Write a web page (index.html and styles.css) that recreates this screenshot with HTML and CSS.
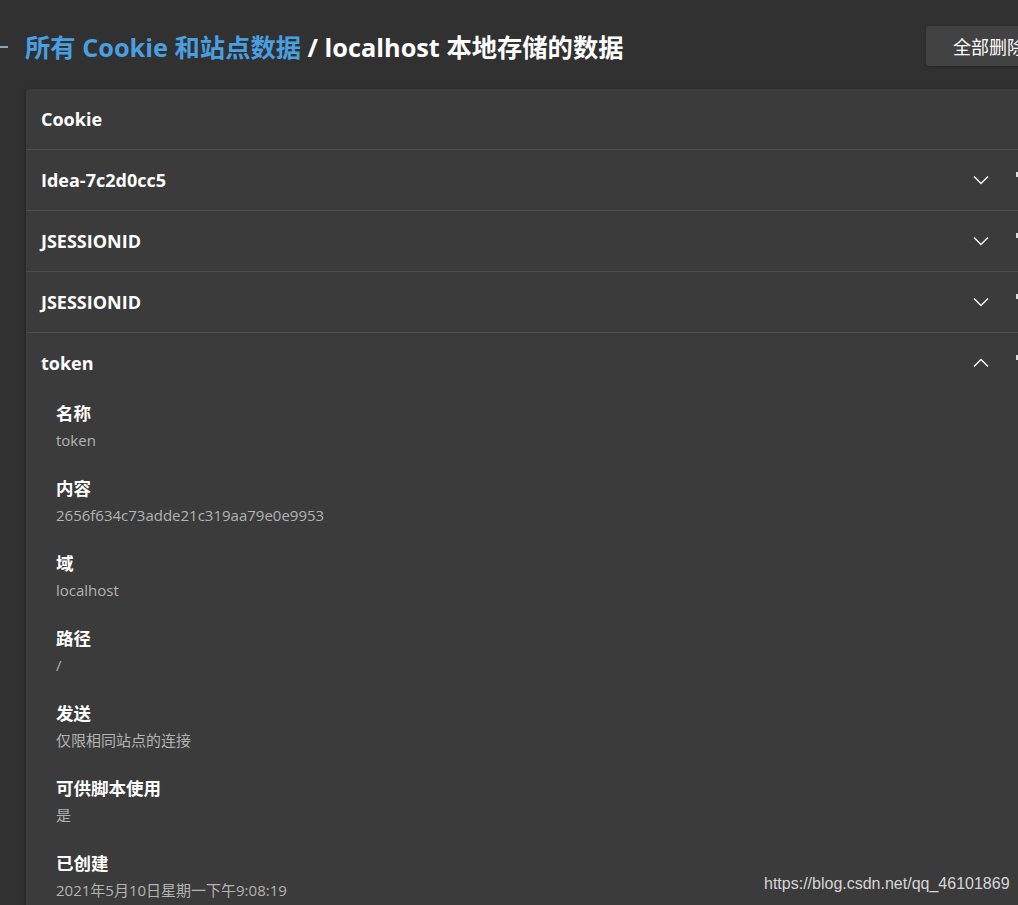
FILE: index.html
```html
<!DOCTYPE html>
<html lang="zh-CN">
<head>
    <meta charset="UTF-8">
    <title>localhost 本地存储的数据</title>
    <link rel="stylesheet" href="styles.css">
</head>
<body>
<div class="page">
    <div class="top">
        <span class="back"></span>
        <h1><span class="crumb">所有 Cookie 和站点数据</span> / localhost 本地存储的数据</h1>
        <button class="remove-all">全部删除</button>
    </div>
    <div class="card">
        <div class="card-head">Cookie</div>
        <div class="row">
            <span class="name">Idea-7c2d0cc5</span>
            <svg class="chev" viewBox="0 0 16 10"><path d="M1 1.5 L8 8.5 L15 1.5"/></svg>
            <span class="edge"></span>
        </div>
        <div class="row">
            <span class="name">JSESSIONID</span>
            <svg class="chev" viewBox="0 0 16 10"><path d="M1 1.5 L8 8.5 L15 1.5"/></svg>
            <span class="edge"></span>
        </div>
        <div class="row">
            <span class="name">JSESSIONID</span>
            <svg class="chev" viewBox="0 0 16 10"><path d="M1 1.5 L8 8.5 L15 1.5"/></svg>
            <span class="edge"></span>
        </div>
        <div class="row open">
            <span class="name">token</span>
            <svg class="chev" viewBox="0 0 16 10"><path d="M1 8.5 L8 1.5 L15 8.5"/></svg>
            <span class="edge"></span>
        </div>
        <div class="details">
            <div class="item"><div class="label">名称</div><div class="value">token</div></div>
            <div class="item"><div class="label">内容</div><div class="value">2656f634c73adde21c319aa79e0e9953</div></div>
            <div class="item"><div class="label">域</div><div class="value">localhost</div></div>
            <div class="item"><div class="label">路径</div><div class="value">/</div></div>
            <div class="item"><div class="label">发送</div><div class="value">仅限相同站点的连接</div></div>
            <div class="item"><div class="label">可供脚本使用</div><div class="value">是</div></div>
            <div class="item"><div class="label">已创建</div><div class="value">2021年5月10日星期一下午9:08:19</div></div>
        </div>
    </div>
</div>
<div class="mark">https://blog.csdn.net/qq_46101869</div>
</body>
</html>
```

FILE: styles.css
```css
html, body { margin: 0; height: 100%; }
body {
    background: #313131;
    color: #fff;
    font-family: "Open Sans", "Noto Sans CJK SC", sans-serif;
    overflow: hidden;
    position: relative;
}
.page { width: 1060px; padding: 26px 0 0 0; }
.top {
    display: flex;
    align-items: center;
    height: 40px;
    margin-bottom: 23px;
}
.back {
    width: 8px;
    height: 2px;
    background: #8aa6c0;
    margin-right: 17px;
    margin-top: 2px;
}
h1 {
    margin: 0;
    font-size: 25.3px;
    font-weight: 700;
    flex: 1;
}
.crumb { color: #4a9fe0; }
.remove-all {
    width: 130px;
    height: 40px;
    margin-right: 4px;
    background: #424242;
    color: #fff;
    border: none;
    border-radius: 3px;
    font-family: "Noto Sans CJK SC", sans-serif;
    font-size: 18px;
    text-align: left;
    padding: 0 0 0 27px;
    box-shadow: 0 1px 3px #0004;
}
.card {
    margin-left: 26px;
    background: #3b3b3b;
    border-radius: 4px 0 0 0;
    box-shadow: 0 1px 4px #0005;
}
.card-head {
    height: 60px;
    display: flex;
    align-items: center;
    padding-left: 15px;
    font-size: 18px;
    font-weight: 700;
    border-bottom: 1px solid #4d4d4d;
}
.row {
    height: 60px;
    display: flex;
    align-items: center;
    padding-left: 15px;
    border-bottom: 1px solid #4d4d4d;
}
.row.open { border-bottom: none; }
.name { flex: 1; font-size: 18px; font-weight: 700; }
.chev {
    width: 16px;
    height: 10px;
    fill: none;
    stroke: #f2f2f2;
    stroke-width: 1.5;
    margin-right: 27px;
}
.edge {
    width: 3px;
    height: 5px;
    background: #ddd;
    margin-right: 41px;
    margin-top: -12px;
}
.details { padding: 9px 0 0 30px; }
.item { height: 75px; }
.label { font-size: 17.5px; font-weight: 700; line-height: 22px; }
.value { font-size: 15px; color: #b3b3b3; line-height: 22px; margin-top: 5px; }
.mark {
    position: absolute;
    left: 764px;
    top: 875px;
    font-family: "Liberation Sans", Arial, sans-serif;
    font-size: 16px;
    color: #d6d6d6;
}
```
